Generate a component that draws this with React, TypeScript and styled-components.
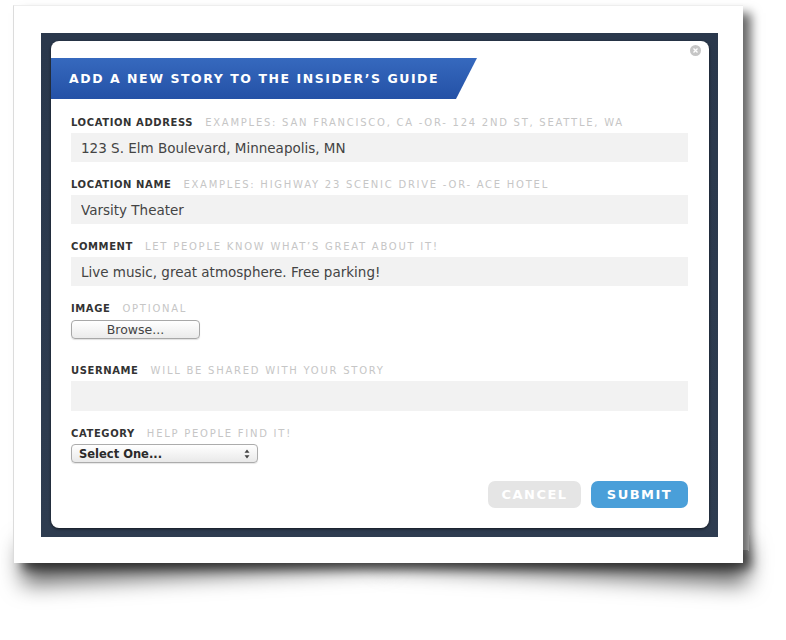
import React from "react";
import styled, { createGlobalStyle } from "styled-components";

const GlobalStyle = createGlobalStyle`
  body {
    margin: 0;
    background: #fff;
    font-family: "DejaVu Sans", Verdana, sans-serif;
  }
`;

const Page = styled.div`
  padding: 5px 0 0 13px;
  isolation: isolate;
  height: 640px;
  box-sizing: border-box;
`;

const Card = styled.div`
  position: relative;
  width: 730px;
  height: 558px;
  box-sizing: border-box;
  padding: 27px 25px 26px 27px;
  background: #fff;
  border-left: 1px solid #dcdcdc;
  border-top: 1px solid #eee;
  box-shadow: 9px 7px 10px -1px rgba(0, 0, 0, 0.6);

  /* page-curl shadows under the corners */
  &::before,
  &::after {
    content: "";
    position: absolute;
    z-index: -1;
    bottom: 22px;
    height: 40px;
    width: 50%;
    box-shadow: 0 34px 22px rgba(0, 0, 0, 0.6);
  }
  &::before {
    left: 6px;
    transform: rotate(-3deg);
  }
  &::after {
    right: -6px;
    transform: rotate(3deg);
  }
`;

const Frame = styled.div`
  height: 100%;
  box-sizing: border-box;
  padding: 8px 9px 9px 10px;
  background: linear-gradient(#2a384c, #2e3c50);
`;

const Modal = styled.div`
  position: relative;
  height: 100%;
  box-sizing: border-box;
  padding-top: 17px;
  background: #fff;
  border-radius: 8px;
  box-shadow: 0 1px 3px rgba(0, 0, 0, 0.6);
`;

const CloseButton = styled.div`
  position: absolute;
  top: 4px;
  right: 8px;
  width: 11px;
  height: 11px;
  border-radius: 50%;
  background: #c6c6c6;
  display: flex;
  align-items: center;
  justify-content: center;
`;

const Banner = styled.h2`
  margin: 0;
  width: 426px;
  height: 41px;
  box-sizing: border-box;
  padding-left: 18px;
  display: flex;
  align-items: center;
  background: linear-gradient(#3669be, #2451a6);
  clip-path: polygon(0 0, 100% 0, calc(100% - 21px) 100%, 0 100%);
  color: #fff;
  font-size: 12.5px;
  font-weight: 700;
  letter-spacing: 1.55px;
  white-space: nowrap;
`;

const Form = styled.form`
  padding: 16px 21px 0 20px;
`;

const Field = styled.div`
  display: flex;
  flex-direction: column;
  gap: 4px;
  margin-bottom: 15px;
`;

const LabelRow = styled.div`
  display: flex;
  align-items: center;
  height: 14px;
  white-space: nowrap;
`;

const Label = styled.span`
  font-size: 10px;
  font-weight: 700;
  color: #333;
  letter-spacing: 0.6px;
`;

const Hint = styled.span`
  margin-left: 12px;
  font-size: 10px;
  color: #c6c6c6;
  letter-spacing: 1.75px;
`;

const TextInput = styled.input<{ $tall?: boolean }>`
  height: ${(p) => (p.$tall ? "30px" : "29px")};
  box-sizing: border-box;
  padding: 0 10px;
  border: none;
  outline: none;
  background: #f2f2f2;
  font-family: "DejaVu Sans", Verdana, sans-serif;
  font-size: 13.5px;
  color: #444;
`;

const FileSlot = styled.div`
  height: 29px;
`;

const BrowseButton = styled.button`
  width: 129px;
  height: 19px;
  padding: 0;
  border: 1px solid #a8a8a8;
  border-radius: 4px;
  background: linear-gradient(#ffffff, #ebebeb);
  box-shadow: 0 1px 1px rgba(0, 0, 0, 0.12);
  font-family: "DejaVu Sans", Verdana, sans-serif;
  font-size: 12.5px;
  color: #444;
`;

const SelectBox = styled.div`
  width: 187px;
  height: 19px;
  box-sizing: border-box;
  padding: 0 7px 0 7px;
  display: flex;
  align-items: center;
  justify-content: space-between;
  border: 1px solid #acacac;
  border-radius: 4px;
  background: linear-gradient(#ffffff, #e9e9e9);
  box-shadow: 0 1px 1px rgba(0, 0, 0, 0.1);
  font-size: 11.5px;
  font-weight: 700;
  color: #2a2a2a;
`;

const ButtonRow = styled.div`
  display: flex;
  justify-content: flex-end;
  gap: 10px;
  padding-top: 3px;
`;

const ActionButton = styled.button<{ $primary?: boolean }>`
  width: ${(p) => (p.$primary ? "97px" : "93px")};
  height: 27px;
  padding: 0;
  border: none;
  border-radius: 7px;
  background: ${(p) => (p.$primary ? "#4a9fd9" : "#e5e5e5")};
  color: #fff;
  font-family: "DejaVu Sans", Verdana, sans-serif;
  font-size: 13px;
  font-weight: 700;
  letter-spacing: 1.5px;
`;

const fields = [
  {
    label: "LOCATION ADDRESS",
    hint: "EXAMPLES: SAN FRANCISCO, CA -OR- 124 2ND ST, SEATTLE, WA",
    value: "123 S. Elm Boulevard, Minneapolis, MN",
  },
  {
    label: "LOCATION NAME",
    hint: "EXAMPLES: HIGHWAY 23 SCENIC DRIVE -OR- ACE HOTEL",
    value: "Varsity Theater",
  },
  {
    label: "COMMENT",
    hint: "LET PEOPLE KNOW WHAT’S GREAT ABOUT IT!",
    value: "Live music, great atmosphere. Free parking!",
  },
];

const App: React.FC = () => {
  return (
    <Page>
      <GlobalStyle />
      <Card>
        <Frame>
          <Modal>
            <CloseButton>
              <svg width="5" height="5" viewBox="0 0 5 5">
                <path d="M0.5 0.5 L4.5 4.5 M4.5 0.5 L0.5 4.5" stroke="#fff" strokeWidth="1.3" />
              </svg>
            </CloseButton>
            <Banner>ADD A NEW STORY TO THE INSIDER’S GUIDE</Banner>
            <Form>
              {fields.map((f) => (
                <Field key={f.label}>
                  <LabelRow>
                    <Label>{f.label}</Label>
                    <Hint>{f.hint}</Hint>
                  </LabelRow>
                  <TextInput defaultValue={f.value} />
                </Field>
              ))}

              <Field>
                <LabelRow>
                  <Label>IMAGE</Label>
                  <Hint>OPTIONAL</Hint>
                </LabelRow>
                <FileSlot>
                  <BrowseButton type="button">Browse...</BrowseButton>
                </FileSlot>
              </Field>

              <Field>
                <LabelRow>
                  <Label>USERNAME</Label>
                  <Hint>WILL BE SHARED WITH YOUR STORY</Hint>
                </LabelRow>
                <TextInput $tall defaultValue="" />
              </Field>

              <Field>
                <LabelRow>
                  <Label>CATEGORY</Label>
                  <Hint>HELP PEOPLE FIND IT!</Hint>
                </LabelRow>
                <SelectBox>
                  <span>Select One...</span>
                  <svg width="6" height="10" viewBox="0 0 6 10">
                    <path d="M3 0.5 L5.5 3.8 H0.5 Z M3 9.5 L5.5 6.2 H0.5 Z" fill="#444" />
                  </svg>
                </SelectBox>
              </Field>

              <ButtonRow>
                <ActionButton type="button">CANCEL</ActionButton>
                <ActionButton type="button" $primary>
                  SUBMIT
                </ActionButton>
              </ButtonRow>
            </Form>
          </Modal>
        </Frame>
      </Card>
    </Page>
  );
};

export default App;
